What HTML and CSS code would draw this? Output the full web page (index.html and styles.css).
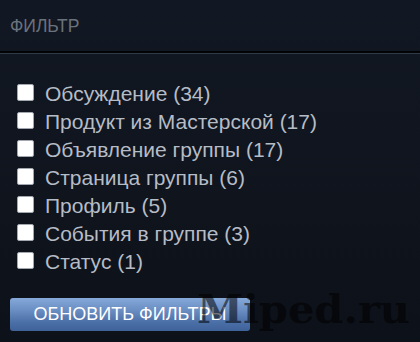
FILE: index.html
```html
<!DOCTYPE html>
<html lang="ru">
<head>
<meta charset="utf-8">
<link rel="stylesheet" href="styles.css">
</head>
<body>
<div class="panel">
  <div class="head">ФИЛЬТР</div>
  <div class="sep"></div>
  <ul class="list">
    <li><span class="box"></span><span class="lbl">Обсуждение (34)</span></li>
    <li><span class="box"></span><span class="lbl">Продукт из Мастерской (17)</span></li>
    <li><span class="box"></span><span class="lbl">Объявление группы (17)</span></li>
    <li><span class="box"></span><span class="lbl">Страница группы (6)</span></li>
    <li><span class="box"></span><span class="lbl">Профиль (5)</span></li>
    <li><span class="box"></span><span class="lbl">События в группе (3)</span></li>
    <li><span class="box"></span><span class="lbl">Статус (1)</span></li>
  </ul>
  <div class="foot">
    <button class="btn">ОБНОВИТЬ ФИЛЬТРЫ</button>
    <div class="mark">Miped.ru</div>
  </div>
</div>
</body>
</html>
```

FILE: styles.css
```css
html, body {
  margin: 0;
  padding: 0;
}
body {
  width: 420px;
  height: 342px;
  overflow: hidden;
  background: linear-gradient(to bottom, #121823 0%, #0f141d 60%, #0d1119 100%);
  font-family: "Liberation Sans", Arial, sans-serif;
}
.panel {
  display: flex;
  flex-direction: column;
}
.head {
  height: 51px;
  padding-left: 10px;
  box-sizing: border-box;
  padding-top: 14px;
  font-size: 17.5px;
  color: #6a727d;
  line-height: 24px;
}
.sep {
  height: 2px;
  background: #020304;
  border-bottom: 1px solid #313b47;
}
.list {
  list-style: none;
  margin: 0;
  padding: 24px 0 0 17px;
}
.list li {
  display: flex;
  align-items: center;
  height: 28px;
  gap: 11px;
}
.box {
  width: 17px;
  height: 17px;
  background: #ffffff;
  border: 1px solid #a3a8b0;
  border-radius: 2px;
  box-sizing: border-box;
}
.lbl {
  font-size: 21px;
  color: #b6bcc6;
  line-height: 24px;
  margin-top: 3px;
}
.foot {
  position: relative;
  padding: 24px 0 0 10px;
}
.btn {
  display: block;
  width: 240px;
  height: 33px;
  border: none;
  border-radius: 3px;
  background: linear-gradient(to bottom, #86a9da 0%, #6c8fc4 35%, #4a6ea6 75%, #3f6299 100%);
  color: #ffffff;
  font-family: "Liberation Sans", Arial, sans-serif;
  font-size: 18px;
  padding: 0;
  text-align: center;
  line-height: 33px;
}
.mark {
  position: absolute;
  left: 197px;
  top: 15px;
  font-family: "DejaVu Serif", "Liberation Serif", serif;
  font-weight: bold;
  font-size: 38.5px;
  line-height: 42px;
  color: rgba(0, 0, 0, 0.55);
  white-space: nowrap;
  transform: scaleX(1.08);
  transform-origin: left center;
}
```
